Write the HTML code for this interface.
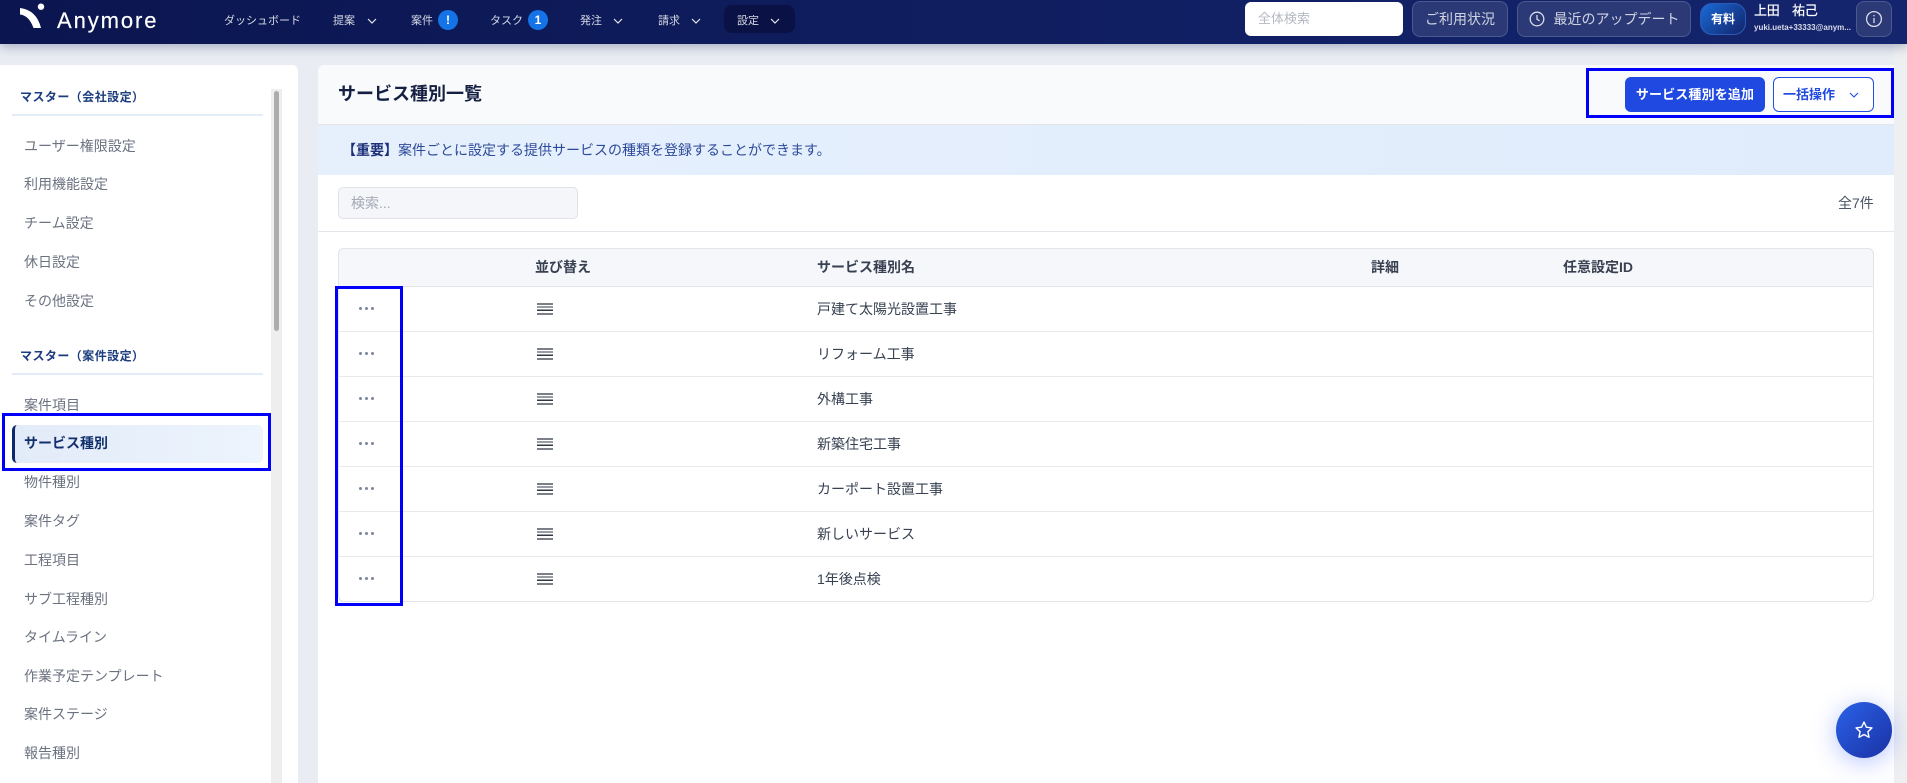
<!DOCTYPE html>
<html lang="ja"><head><meta charset="utf-8"><title>サービス種別一覧</title>
<style>
*{box-sizing:border-box}
html,body{margin:0;padding:0;width:1907px;height:783px;overflow:hidden;background:#e9ecf3;font-family:"Liberation Sans","Noto Sans CJK JP",sans-serif}
.a{position:absolute;white-space:nowrap}
.t{position:absolute;white-space:nowrap;height:20px;line-height:20px;margin-top:-10px}
#hd{position:absolute;left:0;top:0;width:1907px;height:44px;background:linear-gradient(90deg,#0b1650,#14256e);box-shadow:0 3px 10px rgba(20,35,90,.3);z-index:3}
.n{font-size:11px;color:#d5d8e4;top:21px}
.bd{position:absolute;top:10px;width:20px;height:20px;border-radius:50%;background:#1473e6;color:#fff;font-size:12px;font-weight:700;text-align:center;line-height:20px}
.gb{position:absolute;top:1px;height:36px;border:1px solid #4a5a8e;border-radius:8px;background:#2b3a77;color:#d0d4e2;font-size:14px;line-height:34px;text-align:center}
.it{font-size:14px;color:#6b7280;left:24px}
.st{font-size:12px;font-weight:700;color:#1c3d7e;left:20px;letter-spacing:.45px}
.dv{position:absolute;left:12px;width:251px;height:2px;background:#e3edf9}
.r{position:absolute;left:338px;width:1536px;height:45px;border-bottom:1px solid #e8eaee}
.dots{position:absolute;left:21px;top:20px;width:16px;height:4px}
.dots i{position:absolute;top:0;width:3.2px;height:3.2px;border-radius:50%;background:#7d879c}
.ham{position:absolute;left:199px;top:16px;width:16px;height:12px;background:linear-gradient(180deg,#7b7f88 0,#7b7f88 2px,#fff 2px,#fff 3.3px,#333845 3.3px,#333845 4.7px,#fff 4.7px,#fff 6.7px,#333845 6.7px,#333845 8.1px,#fff 8.1px,#fff 10px,#7b7f88 10px,#7b7f88 12px)}
.rt{position:absolute;left:479px;top:12px;line-height:20px;font-size:14px;color:#374151;white-space:nowrap}
.th{font-size:14px;font-weight:700;color:#374151;top:267px}
.bx{position:absolute;border:3px solid #0000fa;z-index:2}
</style></head><body>

<div id="hd">
<svg class="a" style="left:0;top:0" width="60" height="44"><path d="M20 8 L20 14.5 Q29 15.5 33.5 28 L41 28 Q36.5 10 20 8Z" fill="#fff"/><circle cx="41" cy="6.7" r="3.2" fill="#fff"/></svg>
<div class="a" style="left:57px;top:8px;font-size:22px;line-height:26px;letter-spacing:1.9px;color:#fff;-webkit-text-stroke:.2px #fff">Anymore</div>

<span class="t n" style="left:224px">ダッシュボード</span>
<span class="t n" style="left:333px">提案</span>
<svg class="a" style="left:367px;top:17px" width="10" height="8" fill="none" stroke="#e5e7ef" stroke-width="1.2"><path d="M1 2l4 4 4-4"/></svg>
<span class="t n" style="left:411px">案件</span><span class="bd" style="left:438px">!</span>
<span class="t n" style="left:490px">タスク</span><span class="bd" style="left:528px">1</span>
<span class="t n" style="left:580px">発注</span>
<svg class="a" style="left:613px;top:17px" width="10" height="8" fill="none" stroke="#e5e7ef" stroke-width="1.2"><path d="M1 2l4 4 4-4"/></svg>
<span class="t n" style="left:658px">請求</span>
<svg class="a" style="left:691px;top:17px" width="10" height="8" fill="none" stroke="#e5e7ef" stroke-width="1.2"><path d="M1 2l4 4 4-4"/></svg>
<div class="a" style="left:724px;top:5px;width:71px;height:28px;border-radius:8px;background:#0a1245"></div>
<span class="t n" style="left:737px">設定</span>
<svg class="a" style="left:770px;top:17px" width="10" height="8" fill="none" stroke="#e5e7ef" stroke-width="1.2"><path d="M1 2l4 4 4-4"/></svg>

<div class="a" style="left:1245px;top:2px;width:158px;height:34px;background:#fff;border-radius:6px;font-size:13px;line-height:34px;color:#b4b8c2;padding-left:13px">全体検索</div>
<div class="gb" style="left:1412px;width:96px">ご利用状況</div>
<div class="gb" style="left:1517px;width:174px;padding-left:25px">最近のアップデート</div>
<svg class="a" style="left:1528px;top:10px" width="18" height="18" fill="none" stroke="#d8dbe6" stroke-width="1.3"><circle cx="9" cy="9" r="6.8"/><path d="M9 5v4.3l2.6 1.5"/></svg>
<div class="a" style="left:1700px;top:3px;width:46px;height:32px;border-radius:12px;border:1px solid #2a5cb8;background:linear-gradient(135deg,#1a6ad8,#12246a);color:#fff;font-size:12px;font-weight:700;text-align:center;line-height:30px">有料</div>
<span class="t" style="left:1754px;top:11px;font-size:13px;color:#fff;letter-spacing:-.3px;-webkit-text-stroke:.2px #fff">上田　祐己</span>
<span class="t" style="left:1754px;top:28px;font-size:8px;font-weight:700;color:#d8dbe8">yuki.ueta+33333@anym...</span>
<div class="gb" style="left:1856px;width:36px"></div>
<svg class="a" style="left:1865px;top:10px" width="18" height="18" fill="none" stroke="#d8dbe6" stroke-width="1.3"><circle cx="9" cy="9" r="7.4"/><path d="M9 8v5M9 5v1.4"/></svg>
</div>

<!-- sidebar -->
<div class="a" style="left:0;top:65px;width:298px;height:718px;background:#fff;border-radius:0 6px 0 0"></div>
<div class="a" style="left:271px;top:89px;width:11px;height:694px;background:#eeeeee"></div>
<div class="a" style="left:274px;top:91px;width:5px;height:240px;background:#acacac;border-radius:3px"></div>

<span class="t st" style="top:97px">マスター（会社設定）</span>
<div class="dv" style="top:114px"></div>
<span class="t it" style="top:146px">ユーザー権限設定</span>
<span class="t it" style="top:184px">利用機能設定</span>
<span class="t it" style="top:223px">チーム設定</span>
<span class="t it" style="top:262px">休日設定</span>
<span class="t it" style="top:301px">その他設定</span>
<span class="t st" style="top:356px">マスター（案件設定）</span>
<div class="dv" style="top:373px"></div>
<span class="t it" style="top:405px">案件項目</span>
<div class="a" style="left:12px;top:425px;width:251px;height:38px;border-radius:5px;background:linear-gradient(90deg,#e2ebf8,#edf4fd);border-left:3px solid #0f2a6b"></div>
<span class="t" style="left:24px;top:443px;font-size:14px;font-weight:700;color:#13306e">サービス種別</span>
<span class="t it" style="top:482px">物件種別</span>
<span class="t it" style="top:521px">案件タグ</span>
<span class="t it" style="top:560px">工程項目</span>
<span class="t it" style="top:599px">サブ工程種別</span>
<span class="t it" style="top:637px">タイムライン</span>
<span class="t it" style="top:676px">作業予定テンプレート</span>
<span class="t it" style="top:714px">案件ステージ</span>
<span class="t it" style="top:753px">報告種別</span>
<div class="bx" style="left:2px;top:413px;width:269px;height:58px"></div>

<!-- main card -->
<div class="a" style="left:318px;top:65px;width:1576px;height:718px;background:#fff;border-radius:6px 0 0 0;overflow:hidden">
 <div class="a" style="left:0;top:0;width:1576px;height:60px;background:#f9fafc;border-bottom:1px solid #e3e5ea"></div>
 <div class="a" style="left:0;top:60px;width:1576px;height:50px;background:linear-gradient(90deg,#e6f0fd,#e0ecfc)"></div>
 <div class="a" style="left:0;top:166px;width:1576px;height:1px;background:#e3e5ea"></div>
</div>
<div class="a" style="left:1894px;top:44px;width:13px;height:739px;background:#eeeff1"></div>
<span class="t" style="left:338px;top:94px;font-size:18px;font-weight:700;color:#141f42">サービス種別一覧</span>

<div class="bx" style="left:1586px;top:68px;width:308px;height:50px"></div>
<div class="a" style="left:1625px;top:77px;width:140px;height:35px;border-radius:6px;background:#1f49e0;color:#fff;font-size:13px;font-weight:700;text-align:center;line-height:35px;letter-spacing:.15px">サービス種別を追加</div>
<div class="a" style="left:1773px;top:77px;width:101px;height:35px;border-radius:6px;background:#fff;border:1px solid #2450e0;color:#1f49e0;font-size:13px;font-weight:700;line-height:33px;padding-left:9px">一括操作</div>
<svg class="a" style="left:1849px;top:91px" width="10" height="8" fill="none" stroke="#1f49e0" stroke-width="1.1"><path d="M1 2l4 4 4-4"/></svg>

<span class="t" style="left:342px;top:150px;font-size:14px;color:#2d4a9a"><b style="color:#1c2f78">【重要】</b>案件ごとに設定する提供サービスの種類を登録することができます。</span>

<div class="a" style="left:338px;top:187px;width:240px;height:32px;background:#f5f6f9;border:1px solid #e0e2e8;border-radius:5px;font-size:14px;line-height:30px;color:#a3a8b3;padding-left:12px">検索...</div>
<span class="t" style="left:1838px;top:203px;font-size:14px;color:#4b5563">全7件</span>

<!-- table -->
<div class="a" style="left:338px;top:248px;width:1536px;height:354px;border:1px solid #e2e4e9;border-radius:6px"></div>
<div class="a" style="left:338px;top:248px;width:1536px;height:39px;background:#f6f7fa;border:1px solid #e2e4e9;border-radius:6px 6px 0 0"></div>
<span class="t th" style="left:535px">並び替え</span>
<span class="t th" style="left:817px">サービス種別名</span>
<span class="t th" style="left:1371px">詳細</span>
<span class="t th" style="left:1563px">任意設定ID</span>

<div class="r" style="top:287px"><div class="dots"><i style="left:0"></i><i style="left:6px"></i><i style="left:12px"></i></div><div class="ham"></div><div class="rt">戸建て太陽光設置工事</div></div>
<div class="r" style="top:332px"><div class="dots"><i style="left:0"></i><i style="left:6px"></i><i style="left:12px"></i></div><div class="ham"></div><div class="rt">リフォーム工事</div></div>
<div class="r" style="top:377px"><div class="dots"><i style="left:0"></i><i style="left:6px"></i><i style="left:12px"></i></div><div class="ham"></div><div class="rt">外構工事</div></div>
<div class="r" style="top:422px"><div class="dots"><i style="left:0"></i><i style="left:6px"></i><i style="left:12px"></i></div><div class="ham"></div><div class="rt">新築住宅工事</div></div>
<div class="r" style="top:467px"><div class="dots"><i style="left:0"></i><i style="left:6px"></i><i style="left:12px"></i></div><div class="ham"></div><div class="rt">カーポート設置工事</div></div>
<div class="r" style="top:512px"><div class="dots"><i style="left:0"></i><i style="left:6px"></i><i style="left:12px"></i></div><div class="ham"></div><div class="rt">新しいサービス</div></div>
<div class="r" style="top:557px;border-bottom:none"><div class="dots"><i style="left:0"></i><i style="left:6px"></i><i style="left:12px"></i></div><div class="ham"></div><div class="rt">1年後点検</div></div>

<div class="bx" style="left:335px;top:286px;width:68px;height:320px"></div>

<!-- FAB -->
<div class="a" style="left:1836px;top:702px;width:56px;height:56px;border-radius:50%;background:linear-gradient(135deg,#2b62e8,#1a31a4);box-shadow:0 4px 24px rgba(50,90,255,.35)"></div>
<svg class="a" style="left:1854px;top:720px" width="20" height="20" fill="none" stroke="#fff" stroke-width="1.4" stroke-linejoin="round"><path d="M10 2l2.4 5.2 5.6.7-4.1 3.8 1.1 5.6-5-2.8-5 2.8 1.1-5.6L2 7.9l5.6-.7z"/></svg>
</body></html>
